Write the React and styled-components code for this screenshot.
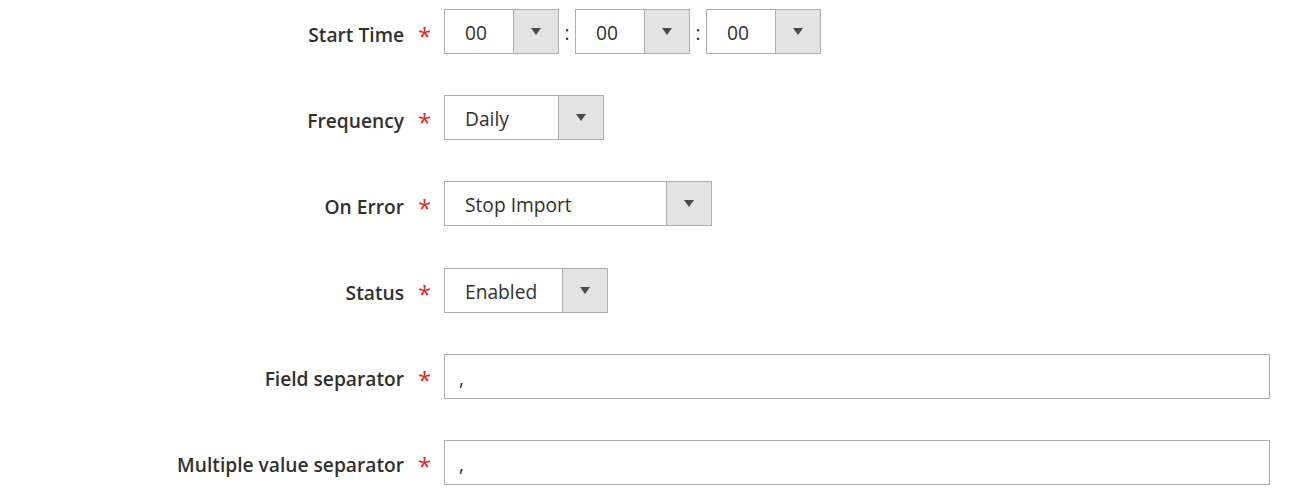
import React from 'react';
import styled, { createGlobalStyle } from 'styled-components';

const GlobalStyle = createGlobalStyle`
  body {
    margin: 0;
    background: #ffffff;
    font-family: "Open Sans", "Liberation Sans", sans-serif;
    color: #303030;
  }
`;

const Form = styled.div`
  display: flex;
  flex-direction: column;
  gap: 41.2px;
  padding: 9px 40px 0 0;
`;

const Row = styled.div`
  display: grid;
  grid-template-columns: 404px 40px 1fr;
  align-items: center;
`;

const Label = styled.label`
  text-align: right;
  font-size: 19.2px;
  font-weight: 600;
  color: #303030;
  padding-top: 5px;
`;

const Required = styled.span`
  color: #e22626;
  font-size: 24px;
  font-weight: 400;
  padding-left: 14px;
  line-height: 1;
  position: relative;
  top: 4px;
`;

const Controls = styled.div`
  display: flex;
  align-items: center;
`;

const SelectBox = styled.div`
  box-sizing: border-box;
  display: flex;
  width: ${(p) => p.$width}px;
  height: 45px;
  border: 1px solid #adadad;
  background: #ffffff;
`;

const SelectValue = styled.div`
  flex: 1;
  display: flex;
  align-items: center;
  padding: 2px 0 0 20px;
  font-size: 19.2px;
  color: #303030;
`;

const ArrowButton = styled.div`
  width: 44px;
  display: flex;
  align-items: center;
  justify-content: center;
  background: #e3e3e3;
  border-left: 1px solid #adadad;
`;

const Arrow = styled.span`
  width: 0;
  height: 0;
  border-left: 5.5px solid transparent;
  border-right: 5.5px solid transparent;
  border-top: 7px solid #514943;
`;

const Colon = styled.span`
  width: 16px;
  text-align: center;
  font-size: 19.2px;
  color: #303030;
  padding-top: 2px;
`;

const TextInput = styled.input`
  box-sizing: border-box;
  width: 100%;
  height: 45px;
  border: 1px solid #adadad;
  border-radius: 0;
  padding: 2px 14px 0;
  font-family: "Open Sans", "Liberation Sans", sans-serif;
  font-size: 19.2px;
  color: #303030;
  background: #ffffff;
  outline: none;
`;

const Select = ({ value, width }) => (
  <SelectBox $width={width}>
    <SelectValue>{value}</SelectValue>
    <ArrowButton>
      <Arrow />
    </ArrowButton>
  </SelectBox>
);

const Field = ({ label, children }) => (
  <Row>
    <Label>{label}</Label>
    <Required>*</Required>
    <Controls>{children}</Controls>
  </Row>
);

export default function App() {
  return (
    <>
      <GlobalStyle />
      <Form>
        <Field label="Start Time">
          <Select value="00" width={115} />
          <Colon>:</Colon>
          <Select value="00" width={115} />
          <Colon>:</Colon>
          <Select value="00" width={115} />
        </Field>
        <Field label="Frequency">
          <Select value="Daily" width={160} />
        </Field>
        <Field label="On Error">
          <Select value="Stop Import" width={268} />
        </Field>
        <Field label="Status">
          <Select value="Enabled" width={164} />
        </Field>
        <Field label="Field separator">
          <TextInput defaultValue="," />
        </Field>
        <Field label="Multiple value separator">
          <TextInput defaultValue="," />
        </Field>
      </Form>
    </>
  );
}
